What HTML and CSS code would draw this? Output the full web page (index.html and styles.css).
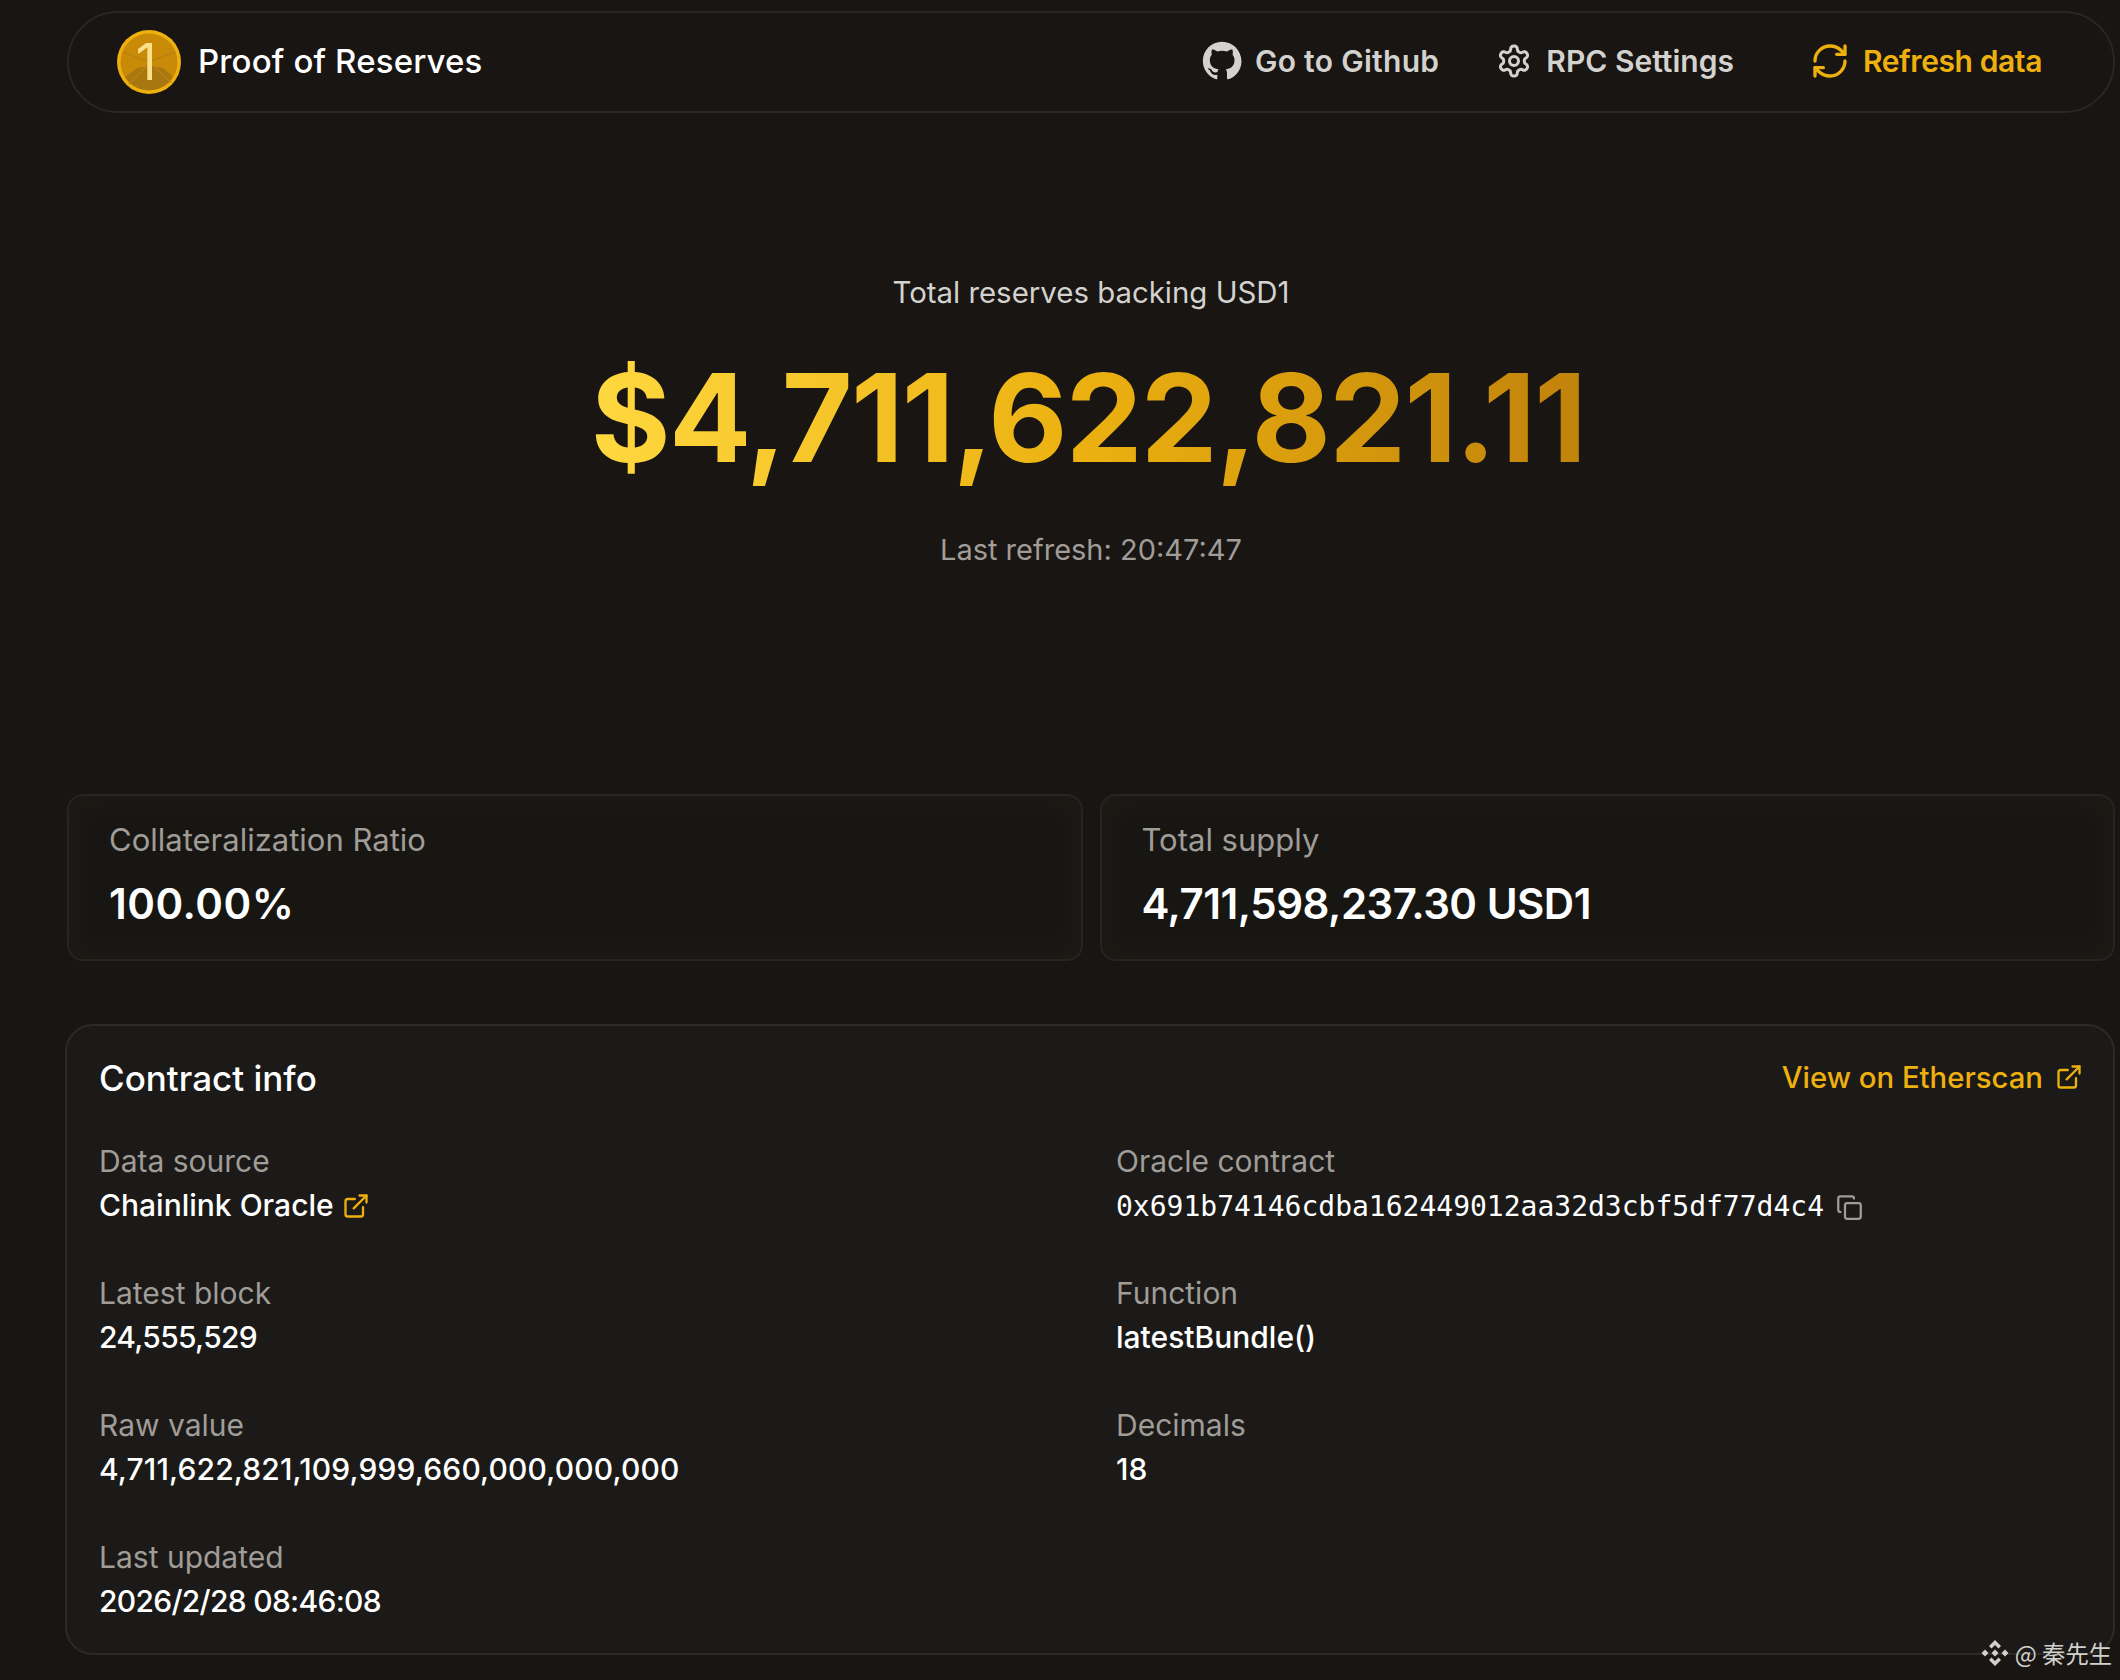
FILE: index.html

```html
<!DOCTYPE html>
<html lang="en">
<head>
  <meta charset="UTF-8">
  <title>Proof of Reserves</title>
  <link rel="stylesheet" href="styles.css">
</head>
<body>
  <header class="topbar">
    <div class="brand">
      <svg class="coin" viewBox="0 0 64 64">
        <circle cx="32" cy="32" r="32" fill="#eeb00e"/>
        <circle cx="32" cy="32" r="28.500" fill="#c98a08"/>
        <path d="M8 47 L20 38 L32 36 L46 38 L56 47 A28.500 28.500 0 0 1 8 47 Z" fill="#a97710"/>
        <path d="M32 32 L6 22 M32 32 L58 22 M30 36 L12 54 M36 36 L54 52" stroke="#b98212" stroke-width="1.500" fill="none"/>
        <text class="coin-num" x="29" y="50" text-anchor="middle">1</text>
      </svg>
      <span class="brand-name">Proof of Reserves</span>
    </div>
    <nav class="nav">
      <a class="nav-link nav-github">
        <svg class="icon-github" viewBox="0 0 24 24"><path fill="currentColor" d="M12 .5C5.6.5.5 5.6.5 12c0 5.1 3.3 9.4 7.900 10.900.6.1.8-.2.8-.6v-2.100c-3.200.7-3.900-1.400-3.900-1.400-.5-1.300-1.300-1.700-1.300-1.700-1-.7.1-.7.1-.7 1.200.1 1.800 1.200 1.800 1.200 1 1.800 2.700 1.300 3.400 1 .1-.8.4-1.300.7-1.600-2.600-.3-5.300-1.300-5.300-5.700 0-1.300.5-2.300 1.200-3.100-.1-.3-.5-1.500.1-3.100 0 0 1-.3 3.200 1.200a11 11 0 0 1 5.800 0c2.200-1.500 3.200-1.200 3.200-1.200.6 1.600.2 2.800.1 3.100.7.8 1.200 1.800 1.200 3.100 0 4.400-2.700 5.400-5.300 5.700.4.4.8 1.100.8 2.200v3.200c0 .3.2.7.8.6 4.600-1.500 7.900-5.800 7.900-10.900C23.500 5.600 18.400.5 12 .5z"/></svg>
        Go to Github
      </a>
      <a class="nav-link nav-rpc">
        <svg class="icon-gear" viewBox="0 0 24 24" fill="none" stroke="currentColor" stroke-width="2" stroke-linecap="round" stroke-linejoin="round"><path d="M12.220 2h-.44a2 2 0 0 0-2 2v.18a2 2 0 0 1-1 1.730l-.43.25a2 2 0 0 1-2 0l-.15-.08a2 2 0 0 0-2.730.73l-.22.38a2 2 0 0 0 .73 2.730l.15.1a2 2 0 0 1 1 1.720v.51a2 2 0 0 1-1 1.740l-.15.09a2 2 0 0 0-.73 2.730l.22.38a2 2 0 0 0 2.730.73l.15-.08a2 2 0 0 1 2 0l.43.25a2 2 0 0 1 1 1.730V20a2 2 0 0 0 2 2h.44a2 2 0 0 0 2-2v-.18a2 2 0 0 1 1-1.730l.43-.25a2 2 0 0 1 2 0l.15.08a2 2 0 0 0 2.730-.73l.22-.39a2 2 0 0 0-.73-2.730l-.15-.08a2 2 0 0 1-1-1.740v-.5a2 2 0 0 1 1-1.740l.15-.09a2 2 0 0 0 .73-2.730l-.22-.38a2 2 0 0 0-2.730-.73l-.15.08a2 2 0 0 1-2 0l-.43-.25a2 2 0 0 1-1-1.730V4a2 2 0 0 0-2-2z"/><circle cx="12" cy="12" r="3"/></svg>
        RPC Settings
      </a>
      <a class="nav-link nav-refresh">
        <svg class="icon-refresh" viewBox="0 0 24 24" fill="none" stroke="currentColor" stroke-width="2" stroke-linecap="round" stroke-linejoin="round"><path d="M3 12a9 9 0 0 1 9-9 9.750 9.750 0 0 1 6.740 2.740L21 8"/><path d="M21 3v5h-5"/><path d="M21 12a9 9 0 0 1-9 9 9.750 9.750 0 0 1-6.740-2.740L3 16"/><path d="M8 16H3v5"/></svg>
        Refresh data
      </a>
    </nav>
  </header>

  <section class="hero">
    <div class="hero-label">Total reserves backing USD1</div>
    <div class="hero-amount">$4,711,622,821.11</div>
    <div class="hero-time">Last refresh: 20:47:47</div>
  </section>

  <section class="stats">
    <div class="stat-card">
      <div class="stat-label">Collateralization Ratio</div>
      <div class="stat-value stat-ratio">100.00%</div>
    </div>
    <div class="stat-card">
      <div class="stat-label">Total supply</div>
      <div class="stat-value stat-supply">4,711,598,237.30 USD1</div>
    </div>
  </section>

  <section class="contract">
    <div class="contract-head">
      <h2 class="contract-title">Contract info</h2>
      <a class="etherscan">View on Etherscan
        <svg class="icon-ext" viewBox="0 0 24 24" fill="none" stroke="currentColor" stroke-width="2" stroke-linecap="round" stroke-linejoin="round"><path d="M18 13v6a2 2 0 0 1-2 2H5a2 2 0 0 1-2-2V8a2 2 0 0 1 2-2h6"/><path d="M15 3h6v6"/><path d="M10 14 21 3"/></svg>
      </a>
    </div>
    <div class="info-grid">
      <div class="info-item">
        <div class="info-label">Data source</div>
        <div class="info-value">Chainlink Oracle
          <svg class="icon-ext icon-gold" viewBox="0 0 24 24" fill="none" stroke="currentColor" stroke-width="2" stroke-linecap="round" stroke-linejoin="round"><path d="M18 13v6a2 2 0 0 1-2 2H5a2 2 0 0 1-2-2V8a2 2 0 0 1 2-2h6"/><path d="M15 3h6v6"/><path d="M10 14 21 3"/></svg>
        </div>
      </div>
      <div class="info-item">
        <div class="info-label">Oracle contract</div>
        <div class="info-value"><span class="mono">0x691b74146cdba162449012aa32d3cbf5df77d4c4</span>
          <svg class="icon-copy" viewBox="0 0 24 24" fill="none" stroke="currentColor" stroke-width="2" stroke-linecap="round" stroke-linejoin="round"><rect x="8" y="8" width="14" height="14" rx="2"/><path d="M4 16a2 2 0 0 1-2-2V4a2 2 0 0 1 2-2h10a2 2 0 0 1 2 2"/></svg>
        </div>
      </div>
      <div class="info-item">
        <div class="info-label">Latest block</div>
        <div class="info-value num-tight">24,555,529</div>
      </div>
      <div class="info-item">
        <div class="info-label">Function</div>
        <div class="info-value">latestBundle()</div>
      </div>
      <div class="info-item">
        <div class="info-label">Raw value</div>
        <div class="info-value num-wide">4,711,622,821,109,999,660,000,000,000</div>
      </div>
      <div class="info-item">
        <div class="info-label">Decimals</div>
        <div class="info-value">18</div>
      </div>
      <div class="info-item">
        <div class="info-label">Last updated</div>
        <div class="info-value num-tight">2026/2/28 08:46:08</div>
      </div>
    </div>
  </section>

  <div class="watermark">
    <svg class="wm-logo" viewBox="0 0 28 28"><path fill="currentColor" d="M14 1l6 6-2.500 2.500L14 6l-3.500 3.500L8 7zM4 10.500 7.500 14 4 17.500.5 14zM24 10.500 27.500 14 24 17.500 20.500 14zM14 10.500 17.500 14 14 17.500 10.500 14zM14 27l6-6-2.500-2.500L14 22l-3.500-3.500L8 21z"/></svg>
    <span>@ 秦先生</span>
  </div>
</body>
</html>
```

FILE: styles.css

```css
html, body {
  height: 1680px;
}
body {
  margin: 0;
  padding: 11px 5px 0 67px;
  box-sizing: border-box;
  background-color: #181512;
  color: white;
  font-family: Inter, "Noto Sans", sans-serif;
  overflow: hidden;
  position: relative;
}

.topbar {
  height: 102px;
  box-sizing: border-box;
  border: 2px solid #292725;
  border-radius: 51px;
  display: flex;
  align-items: center;
  justify-content: space-between;
  padding: 0 71px 2px 48px;
}
.brand {
  display: flex;
  align-items: center;
  gap: 17px;
}
.coin {
  width: 64px;
  height: 64px;
  margin-top: 2px;
}
.coin-num {
  font-family: Inter, sans-serif;
  font-size: 51px;
  font-weight: 400;
  fill: #fbe08a;
}
.brand-name {
  font-size: 33px;
  font-weight: 500;
  letter-spacing: 0.15px;
}
.nav {
  display: flex;
  align-items: center;
}
.nav-link {
  display: flex;
  align-items: center;
  font-size: 30px;
  font-weight: 600;
  color: #d4d2ce;
}
.nav-github {
  gap: 13px;
  margin-right: 57px;
  letter-spacing: 0.3px;
}
.nav-rpc {
  gap: 14px;
  margin-right: 76px;
}
.nav-refresh {
  gap: 13px;
  color: #eeb00e;
  letter-spacing: -0.4px;
}
.icon-github {
  width: 40px;
  height: 40px;
}
.icon-gear {
  width: 36px;
  height: 36px;
}
.icon-refresh {
  width: 40px;
  height: 40px;
}

.hero {
  height: 681px;
  box-sizing: border-box;
  padding-top: 162px;
  text-align: center;
}
.hero-label {
  font-size: 29.400px;
  line-height: 36px;
  color: #d4d2ce;
}
.hero-amount {
  margin-top: 32px;
  padding-right: 6px;
  font-size: 122px;
  line-height: 150px;
  font-weight: 700;
  letter-spacing: -1.700px;
  background: linear-gradient(90deg, #ffd83f 0%, #ebb010 50%, #c0820a 100%);
  -webkit-background-clip: text;
  background-clip: text;
  color: transparent;
  width: fit-content;
  margin-left: auto;
  margin-right: auto;
}
.hero-time {
  margin-top: 39px;
  font-size: 29px;
  line-height: 36px;
  color: #a09c97;
}

.stats {
  display: grid;
  grid-template-columns: 1fr 1fr;
  gap: 17px;
}
.stat-card {
  height: 167px;
  box-sizing: border-box;
  border: 2px solid #272522;
  border-radius: 16px;
  padding: 24px 40px;
  background-color: #181613;
  box-shadow: inset 0 0 24px 8px #1d1b16;
}
.stat-label {
  font-size: 31px;
  line-height: 40px;
  color: #a09c97;
}
.stat-value {
  margin-top: 19px;
  font-size: 42px;
  line-height: 50px;
  font-weight: 600;
}
.stat-ratio {
  letter-spacing: 0.5px;
}
.stat-supply {
  letter-spacing: -0.5px;
}

.contract {
  margin-top: 63px;
  margin-left: -2px;
  height: 631px;
  box-sizing: border-box;
  border: 2px solid #2c2a28;
  border-radius: 28px;
  background-color: #1b1a18;
  padding: 30px 30px 0 32px;
}
.contract-head {
  display: flex;
  justify-content: space-between;
  align-items: center;
  height: 44px;
}
.contract-title {
  margin: 0;
  font-size: 35px;
  font-weight: 500;
}
.etherscan {
  display: flex;
  align-items: center;
  gap: 12px;
  margin-top: -2px;
  font-size: 29.300px;
  font-weight: 500;
  color: #eeb00e;
}
.icon-ext {
  width: 28px;
  height: 28px;
}
.icon-gold {
  color: #eeb00e;
  vertical-align: -4px;
}
.info-grid {
  margin-top: 41px;
  display: grid;
  grid-template-columns: 1fr 1fr;
  column-gap: 50px;
  row-gap: 44px;
}
.info-item {
  height: 88px;
}
.info-label {
  font-size: 30px;
  line-height: 40px;
  color: #a09c97;
}
.info-value {
  margin-top: 2px;
  font-size: 30px;
  line-height: 44px;
  font-weight: 500;
}
.num-tight {
  letter-spacing: -0.7px;
}
.num-wide {
  letter-spacing: 0.15px;
}
.mono {
  font-family: "DejaVu Sans Mono", monospace;
  font-size: 28px;
  font-weight: 400;
}
.icon-copy {
  width: 27px;
  height: 27px;
  color: #a09c97;
  vertical-align: -5px;
  margin-left: 4px;
}

/* overlay mark in the bottom corner */
.watermark {
  position: absolute;
  right: 8px;
  bottom: 10px;
  display: flex;
  align-items: center;
  gap: 6px;
  font-family: "Noto Sans CJK SC", "Noto Sans", sans-serif;
  font-size: 23.300px;
  color: #d2d0cc;
}
.wm-logo {
  width: 28px;
  height: 28px;
}
```
